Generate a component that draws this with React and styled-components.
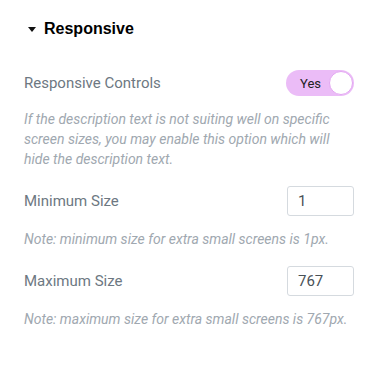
import React from "react";
import styled, { createGlobalStyle } from "styled-components";

const GlobalStyle = createGlobalStyle`
  body {
    margin: 0;
    background: #fff;
    font-family: Roboto, "Liberation Sans", sans-serif;
  }
`;

const fields = [
  {
    label: "Minimum Size",
    value: "1",
    note: "Note: minimum size for extra small screens is 1px.",
  },
  {
    label: "Maximum Size",
    value: "767",
    note: "Note: maximum size for extra small screens is 767px.",
  },
];

const App = () => {
  return (
    <>
      <GlobalStyle />
      <Panel>
        <SectionTitle>
          <Caret />
          Responsive
        </SectionTitle>

        <Row>
          <Label>Responsive Controls</Label>
          <Switch>
            <SwitchText>Yes</SwitchText>
            <Knob />
          </Switch>
        </Row>
        <Description>
          If the description text is not suiting well on specific screen
          sizes, you may enable this option which will hide the description
          text.
        </Description>

        {fields.map((field) => (
          <Field key={field.label}>
            <Row>
              <Label>{field.label}</Label>
              <NumberInput type="text" defaultValue={field.value} />
            </Row>
            <Description>{field.note}</Description>
          </Field>
        ))}
      </Panel>
    </>
  );
};

export default App;

const Panel = styled.div`
  width: 376px;
  height: 385px;
  box-sizing: border-box;
  padding: 18px 22px 0 24px;
`;

const SectionTitle = styled.div`
  display: flex;
  align-items: center;
  gap: 8px;
  padding-left: 4px;
  font-family: "Liberation Sans", Arial, sans-serif;
  font-weight: bold;
  font-size: 16px;
  color: #000;
  height: 22px;
  margin-bottom: 30px;
`;

const Caret = styled.span`
  width: 0;
  height: 0;
  border-left: 4.5px solid transparent;
  border-right: 4.5px solid transparent;
  border-top: 5px solid #111;
`;

const Row = styled.div`
  display: flex;
  align-items: center;
  justify-content: space-between;
`;

const Label = styled.div`
  font-size: 15px;
  color: #6d7882;
`;

const Switch = styled.div`
  width: 68px;
  height: 26px;
  box-sizing: border-box;
  border-radius: 13px;
  background: #ebbcf7;
  display: flex;
  align-items: center;
  justify-content: space-between;
  padding: 0 1px 0 14px;
`;

const SwitchText = styled.span`
  font-size: 13px;
  color: #222;
`;

const Knob = styled.span`
  width: 24px;
  height: 24px;
  box-sizing: border-box;
  border-radius: 50%;
  background: #fff;
  border: 1px solid #e3a6f2;
`;

const Description = styled.p`
  margin: 13px 0 0;
  font-size: 14px;
  font-style: italic;
  line-height: 20px;
  color: #a0a8b0;
`;

const Field = styled.div`
  margin-top: 17px;
`;

const NumberInput = styled.input`
  width: 67px;
  height: 30px;
  box-sizing: border-box;
  border: 1px solid #d5dadf;
  border-radius: 3px;
  padding: 0 10px;
  font-family: Roboto, sans-serif;
  font-size: 15px;
  color: #495157;
  outline: none;
`;
